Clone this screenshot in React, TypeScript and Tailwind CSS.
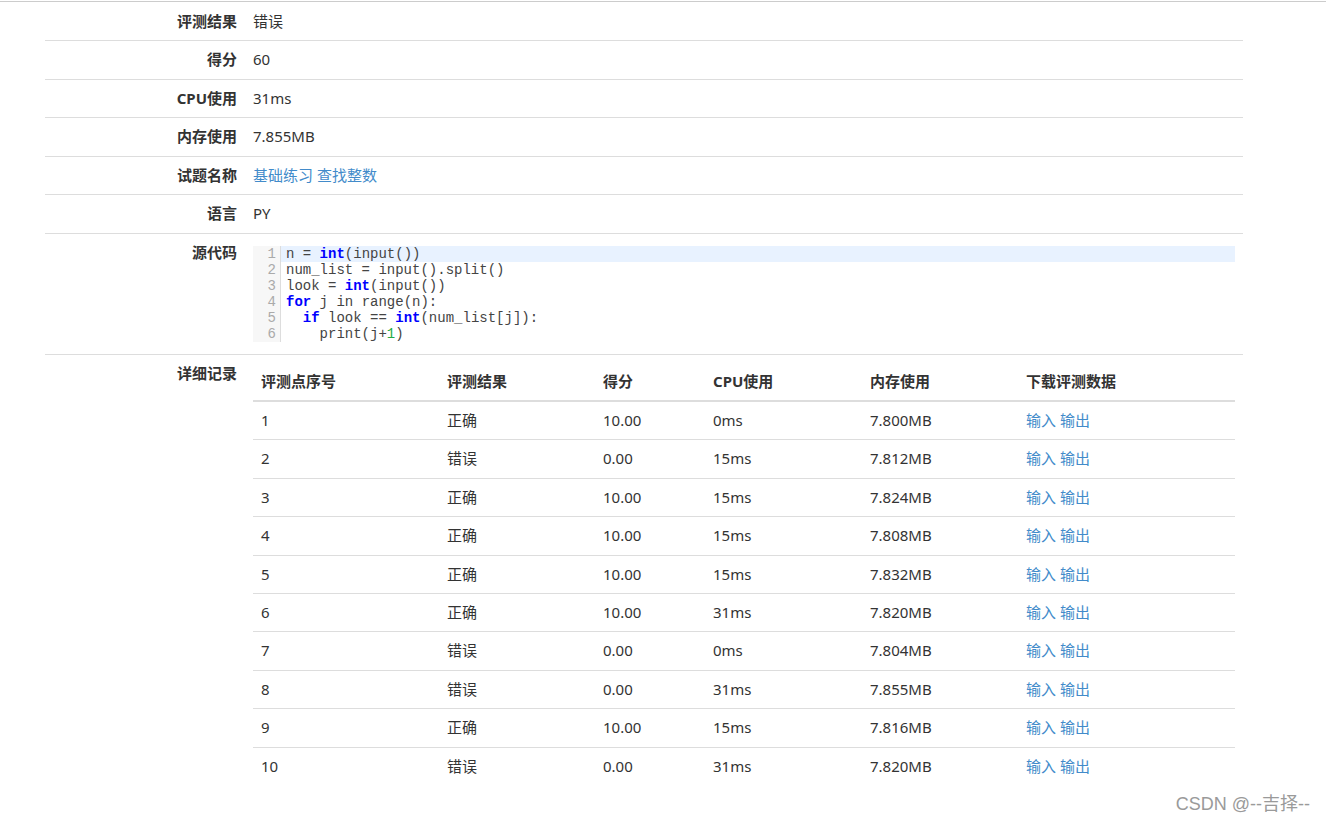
import React from "react";

const records = [
  { id: 1, result: "正确", score: "10.00", cpu: "0ms", mem: "7.800MB" },
  { id: 2, result: "错误", score: "0.00", cpu: "15ms", mem: "7.812MB" },
  { id: 3, result: "正确", score: "10.00", cpu: "15ms", mem: "7.824MB" },
  { id: 4, result: "正确", score: "10.00", cpu: "15ms", mem: "7.808MB" },
  { id: 5, result: "正确", score: "10.00", cpu: "15ms", mem: "7.832MB" },
  { id: 6, result: "正确", score: "10.00", cpu: "31ms", mem: "7.820MB" },
  { id: 7, result: "错误", score: "0.00", cpu: "0ms", mem: "7.804MB" },
  { id: 8, result: "错误", score: "0.00", cpu: "31ms", mem: "7.855MB" },
  { id: 9, result: "正确", score: "10.00", cpu: "15ms", mem: "7.816MB" },
  { id: 10, result: "错误", score: "0.00", cpu: "31ms", mem: "7.820MB" },
];

const Kw = ({ children }: { children: React.ReactNode }) => (
  <span className="font-bold text-[#0000ff]">{children}</span>
);

// each line of the source, already split into tokens
const codeLines: React.ReactNode[] = [
  <>n = <Kw>int</Kw>(input())</>,
  <>num_list = input().split()</>,
  <>look = <Kw>int</Kw>(input())</>,
  <><Kw>for</Kw> j in range(n):</>,
  <>{"  "}<Kw>if</Kw> look == <Kw>int</Kw>(num_list[j]):</>,
  <>{"    "}print(j+<span className="text-[#22aa44]">1</span>)</>,
];

const Row = ({
  label,
  children,
  last,
}: {
  label: string;
  children: React.ReactNode;
  last?: boolean;
}) => (
  <tr className={last ? "" : "border-b border-[#dddddd]"}>
    <th className="w-[200px] p-2 text-right align-top font-bold">{label}</th>
    <td className="p-2 align-top">{children}</td>
  </tr>
);

const CodeBlock = () => (
  <div className="flex bg-white py-1 font-['Courier_New','Liberation_Mono',monospace] text-[14px] leading-[16px]">
    <div className="w-[28px] shrink-0 border-r border-[#dddddd] bg-[#f7f7f7] pr-[4px] text-right text-[#aaaaaa]">
      {codeLines.map((_, i) => (
        <div key={i}>{i + 1}</div>
      ))}
    </div>
    <div className="flex-1 text-[#444444]">
      {codeLines.map((line, i) => (
        <div
          key={i}
          className={`whitespace-pre pl-[5px] ${i === 0 ? "bg-[#e8f2ff]" : ""}`}
        >
          {line}
        </div>
      ))}
    </div>
  </div>
);

const DetailTable = () => (
  <table className="w-full table-fixed border-collapse">
    <colgroup>
      <col className="w-[186px]" />
      <col className="w-[156px]" />
      <col className="w-[110px]" />
      <col className="w-[157px]" />
      <col className="w-[156px]" />
      <col className="w-[217px]" />
    </colgroup>
    <thead>
      <tr className="border-b-2 border-[#dddddd]">
        {["评测点序号", "评测结果", "得分", "CPU使用", "内存使用", "下载评测数据"].map((h) => (
          <th key={h} className="p-2 text-left font-bold">
            {h}
          </th>
        ))}
      </tr>
    </thead>
    <tbody>
      {records.map((r, i) => (
        <tr
          key={r.id}
          className={i === records.length - 1 ? "" : "border-b border-[#dddddd]"}
        >
          <td className="p-2">{r.id}</td>
          <td className="p-2">{r.result}</td>
          <td className="p-2">{r.score}</td>
          <td className="p-2">{r.cpu}</td>
          <td className="p-2">{r.mem}</td>
          <td className="p-2 text-[#428bca]">
            <a>输入</a> <a>输出</a>
          </td>
        </tr>
      ))}
    </tbody>
  </table>
);

const App = () => {
  return (
    <div className="relative min-h-[823px] bg-white pt-[1px] font-['Noto_Sans','Noto_Sans_CJK_SC',sans-serif] text-[15px] leading-[1.42857] text-[#333333]">
      <div className="border-t border-[#cccccc] pt-[1px]">
        <table className="ml-[45px] w-[1198px] border-collapse">
          <tbody>
            <Row label="评测结果">错误</Row>
            <Row label="得分">60</Row>
            <Row label="CPU使用">31ms</Row>
            <Row label="内存使用">7.855MB</Row>
            <Row label="试题名称">
              <a className="text-[#428bca]">基础练习 查找整数</a>
            </Row>
            <Row label="语言">PY</Row>
            <Row label="源代码">
              <CodeBlock />
            </Row>
            <Row label="详细记录" last>
              <DetailTable />
            </Row>
          </tbody>
        </table>
      </div>

      {/* watermark */}
      <div className="absolute bottom-[5px] right-[16px] font-['Liberation_Sans','Noto_Sans_CJK_SC',sans-serif] text-[18px] text-[#9a9a9a]">
        CSDN @--吉择--
      </div>
    </div>
  );
};

export default App;
